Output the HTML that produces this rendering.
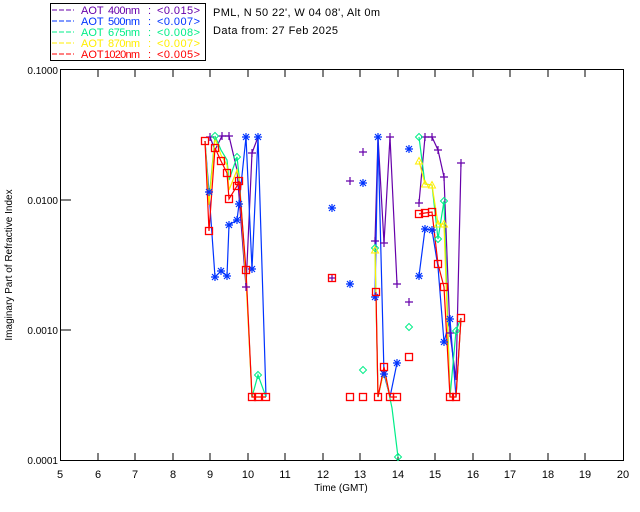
<!DOCTYPE html>
<html><head><meta charset="utf-8"><style>
html,body{margin:0;padding:0;background:#fff;}
svg{display:block;font-family:"Liberation Sans",sans-serif;}
</style></head><body>
<svg width="640" height="512" viewBox="0 0 640 512" xmlns="http://www.w3.org/2000/svg">
<defs>
<g id="sq"><rect x="-3.5" y="-3.5" width="7" height="7" fill="none" stroke="#f00" stroke-width="1.3"/></g>
<g id="st" stroke="#0033ff" stroke-width="1.2"><path d="M-4 0H4M0 -4V4M-3 -3L3 3M-3 3L3 -3"/></g>
<g id="pl" stroke="#6600aa" stroke-width="1.2"><path d="M-4 0H4M0 -4V4"/></g>
<g id="di"><path d="M0 -3.5L3.5 0L0 3.5L-3.5 0Z" fill="none" stroke="#00ee88" stroke-width="1"/></g>
<g id="tr"><path d="M0 -3.5L3.5 3L-3.5 3Z" fill="none" stroke="#ffee00" stroke-width="1"/></g>
</defs>
<!-- legend -->
<rect x="50.5" y="3.5" width="155" height="57" fill="#fff" stroke="#000"/>
<g font-size="11">
<g fill="#6600aa"><path d="M52 10h22" stroke="#6600aa" stroke-dasharray="5,2"/><text x="81" y="14">AOT</text><text x="108" y="14" textLength="32">400nm</text><text x="148" y="14">:</text><text x="157" y="14" textLength="43">&lt;0.015&gt;</text></g>
<g fill="#0033ff"><path d="M52 21h22" stroke="#0033ff" stroke-dasharray="5,2"/><text x="81" y="25">AOT</text><text x="108" y="25" textLength="32">500nm</text><text x="148" y="25">:</text><text x="157" y="25" textLength="43">&lt;0.007&gt;</text></g>
<g fill="#00ee88"><path d="M52 32h22" stroke="#00ee88" stroke-dasharray="5,2"/><text x="81" y="36">AOT</text><text x="108" y="36" textLength="32">675nm</text><text x="148" y="36">:</text><text x="157" y="36" textLength="43">&lt;0.008&gt;</text></g>
<g fill="#ffee00"><path d="M52 43h22" stroke="#ffee00" stroke-dasharray="5,2"/><text x="81" y="47">AOT</text><text x="108" y="47" textLength="32">870nm</text><text x="148" y="47">:</text><text x="157" y="47" textLength="43">&lt;0.007&gt;</text></g>
<g fill="#ff0000"><path d="M52 54h22" stroke="#ff0000" stroke-dasharray="5,2"/><text x="81" y="58">AOT</text><text x="104" y="58" textLength="36">1020nm</text><text x="148" y="58">:</text><text x="157" y="58" textLength="43">&lt;0.005&gt;</text></g>
<text x="213" y="16" fill="#000" textLength="167">PML, N 50 22', W 04 08', Alt 0m</text>
<text x="213" y="34" fill="#000" textLength="125">Data from: 27 Feb 2025</text>
</g>
<!-- axes -->
<rect x="60.5" y="69.5" width="563" height="391" fill="none" stroke="#000" stroke-width="1"/>
<g stroke="#000" stroke-width="1">
<path d="M98 70v7M135 70v7M173 70v7M210 70v7M248 70v7M285 70v7M323 70v7M360 70v7M398 70v7M435 70v7M473 70v7M510 70v7M548 70v7M585 70v7"/>
<path d="M98 460v-7M135 460v-7M173 460v-7M210 460v-7M248 460v-7M285 460v-7M323 460v-7M360 460v-7M398 460v-7M435 460v-7M473 460v-7M510 460v-7M548 460v-7M585 460v-7"/>
<path d="M60 200h11M60 330h11"/>
</g>
<g font-size="10" fill="#000" text-anchor="end">
<text x="58" y="74">0.1000</text><text x="58" y="204">0.0100</text><text x="58" y="334">0.0010</text><text x="58" y="464">0.0001</text>
</g>
<g font-size="11" fill="#000" text-anchor="middle">
<text x="60" y="478">5</text><text x="98" y="478">6</text><text x="135" y="478">7</text><text x="173" y="478">8</text><text x="210" y="478">9</text><text x="248" y="478">10</text><text x="285" y="478">11</text><text x="323" y="478">12</text><text x="360" y="478">13</text><text x="398" y="478">14</text><text x="435" y="478">15</text><text x="473" y="478">16</text><text x="510" y="478">17</text><text x="548" y="478">18</text><text x="585" y="478">19</text><text x="623" y="478">20</text>
<text x="341" y="491" font-size="10">Time (GMT)</text>
<text transform="translate(12,265) rotate(-90)" font-size="10">Imaginary Part of Refractive Index</text>
</g>
<!-- lines -->
<g fill="none" stroke-width="1.2">
<polyline stroke="#6600aa" points="210,137 215,150 222,136 229,136 237,170 246,287 252,153 258,137"/>
<polyline stroke="#6600aa" points="375,241 378,137 384,243 390,137 397,284"/>
<polyline stroke="#6600aa" points="419,203 425,137 432,137 438,150 444,177 450,333 456,380 461,163"/>
<polyline stroke="#0033ff" points="205,141 209,192 215,277 221,271 227,276 229,225 237,220 239,204 246,137 252,269 258,137 266,397"/>
<polyline stroke="#0033ff" points="375,297 378,137 384,374 390,397 397,363"/>
<polyline stroke="#0033ff" points="419,276 425,229 432,230 438,267 444,342 450,319 456,397 461,318"/>
<polyline stroke="#00ee88" points="205,141 209,200 215,136 221,150 227,160 229,180 237,157 239,175 246,275 252,397 258,375 266,397"/>
<polyline stroke="#00ee88" points="375,248 378,397 384,370 392,408 398,457"/>
<polyline stroke="#00ee88" points="419,137 425,184 432,185 438,239 444,201 450,397 456,331 461,318"/>
<polyline stroke="#ffee00" points="205,141 209,205 215,138 221,155 227,165 229,190 237,170 239,178 246,280 252,397 258,397 266,397"/>
<polyline stroke="#ffee00" points="375,250 378,397 384,370 390,397"/>
<polyline stroke="#ffee00" points="419,161 425,184 432,185 438,224 444,224 450,397 456,397 461,318"/>
<polyline stroke="#ff0000" points="205,141 209,231 215,148 221,161 227,173 229,199 237,186 239,181 246,270 252,397 258,397 266,397"/>
<polyline stroke="#ff0000" points="376,292 378,397 384,367 390,397 397,397"/>
<polyline stroke="#ff0000" points="419,214 425,213 432,212 438,264 444,287 450,397 456,397 461,318"/>
</g>
<!-- markers -->
<g>
<use href="#pl" x="210" y="137"/><use href="#pl" x="222" y="136"/><use href="#pl" x="229" y="136"/><use href="#pl" x="246" y="287"/><use href="#pl" x="252" y="153"/>
<use href="#pl" x="363" y="152"/><use href="#pl" x="350" y="181"/><use href="#pl" x="332" y="278"/><use href="#pl" x="390" y="137"/><use href="#pl" x="375" y="241"/><use href="#pl" x="384" y="243"/><use href="#pl" x="397" y="284"/><use href="#pl" x="409" y="302"/><use href="#pl" x="419" y="203"/><use href="#pl" x="425" y="137"/><use href="#pl" x="432" y="137"/><use href="#pl" x="438" y="150"/><use href="#pl" x="444" y="177"/><use href="#pl" x="461" y="163"/><use href="#pl" x="450" y="333"/>
<use href="#st" x="209" y="192"/><use href="#st" x="215" y="277"/><use href="#st" x="221" y="271"/><use href="#st" x="227" y="276"/><use href="#st" x="229" y="225"/><use href="#st" x="237" y="220"/><use href="#st" x="239" y="204"/><use href="#st" x="246" y="137"/><use href="#st" x="252" y="269"/><use href="#st" x="258" y="137"/>
<use href="#st" x="332" y="208"/><use href="#st" x="350" y="284"/><use href="#st" x="363" y="183"/><use href="#st" x="378" y="137"/><use href="#st" x="375" y="297"/><use href="#st" x="384" y="374"/><use href="#st" x="397" y="363"/><use href="#st" x="409" y="149"/><use href="#st" x="419" y="276"/><use href="#st" x="425" y="229"/><use href="#st" x="432" y="230"/><use href="#st" x="444" y="342"/><use href="#st" x="450" y="319"/>
<use href="#di" x="215" y="136"/><use href="#di" x="237" y="157"/><use href="#di" x="258" y="375"/><use href="#di" x="363" y="370"/><use href="#di" x="409" y="327"/><use href="#di" x="419" y="137"/><use href="#di" x="444" y="201"/><use href="#di" x="438" y="239"/><use href="#di" x="456" y="331"/><use href="#di" x="398" y="457"/><use href="#di" x="375" y="248"/>
<use href="#tr" x="419" y="161"/><use href="#tr" x="425" y="184"/><use href="#tr" x="432" y="185"/><use href="#tr" x="438" y="224"/><use href="#tr" x="444" y="224"/><use href="#tr" x="375" y="250"/>
<use href="#sq" x="205" y="141"/><use href="#sq" x="209" y="231"/><use href="#sq" x="215" y="148"/><use href="#sq" x="221" y="161"/><use href="#sq" x="227" y="173"/><use href="#sq" x="229" y="199"/><use href="#sq" x="237" y="186"/><use href="#sq" x="239" y="181"/><use href="#sq" x="246" y="270"/><use href="#sq" x="252" y="397"/><use href="#sq" x="258" y="397"/><use href="#sq" x="266" y="397"/>
<use href="#sq" x="332" y="278"/><use href="#sq" x="350" y="397"/><use href="#sq" x="363" y="397"/><use href="#sq" x="376" y="292"/><use href="#sq" x="378" y="397"/><use href="#sq" x="384" y="367"/><use href="#sq" x="390" y="397"/><use href="#sq" x="397" y="397"/><use href="#sq" x="409" y="357"/><use href="#sq" x="419" y="214"/><use href="#sq" x="425" y="213"/><use href="#sq" x="432" y="212"/><use href="#sq" x="438" y="264"/><use href="#sq" x="444" y="287"/><use href="#sq" x="450" y="397"/><use href="#sq" x="456" y="397"/><use href="#sq" x="461" y="318"/>
</g>
</svg>
</body></html>
